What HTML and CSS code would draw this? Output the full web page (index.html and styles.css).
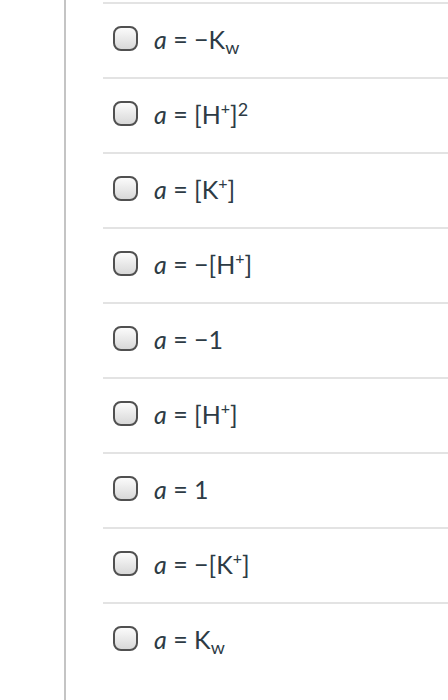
FILE: index.html
```html
<!DOCTYPE html>
<html>
<head>
<meta charset="utf-8">
<link rel="stylesheet" href="styles.css">
</head>
<body>
<div class="page">
  <div class="rail"></div>
  <ul class="answers">
    <li class="answer"><span class="radio"></span><span class="label"><i>a</i> = −K<sub>w</sub></span></li>
    <li class="answer"><span class="radio"></span><span class="label"><i>a</i> = [H<sup class="plus">+</sup>]<sup>2</sup></span></li>
    <li class="answer"><span class="radio"></span><span class="label"><i>a</i> = [K<sup class="plus">+</sup>]</span></li>
    <li class="answer"><span class="radio"></span><span class="label"><i>a</i> = −[H<sup class="plus">+</sup>]</span></li>
    <li class="answer"><span class="radio"></span><span class="label"><i>a</i> = −1</span></li>
    <li class="answer"><span class="radio"></span><span class="label"><i>a</i> = [H<sup class="plus">+</sup>]</span></li>
    <li class="answer"><span class="radio"></span><span class="label"><i>a</i> = 1</span></li>
    <li class="answer"><span class="radio"></span><span class="label"><i>a</i> = −[K<sup class="plus">+</sup>]</span></li>
    <li class="answer"><span class="radio"></span><span class="label"><i>a</i> = K<sub>w</sub></span></li>
  </ul>
</div>
</body>
</html>
```
FILE: styles.css
```css
html, body {
  margin: 0;
  padding: 0;
  background: #fff;
}
body {
  font-family: Lato, "Open Sans", sans-serif;
  color: #2d3b45;
}
.page {
  display: flex;
  height: 700px;
  overflow: hidden;
}
.rail {
  width: 64px;
  flex: none;
  border-right: 2px solid #c4c4c4;
}
.answers {
  list-style: none;
  margin: 0 0 0 37px;
  padding: 2px 0 0 0;
  flex: 1;
}
.answer {
  display: flex;
  align-items: center;
  height: 73px;
  border-top: 2px solid #e3e3e3;
  padding-left: 10px;
}
.radio {
  flex: none;
  width: 21px;
  height: 21px;
  border: 2px solid #505050;
  border-radius: 8px;
  background: linear-gradient(to bottom, #fbfbfb, #d8d8d8);
  margin-top: -4px;
}
.label {
  margin-left: 16px;
  font-size: 25px;
  line-height: 1;
  margin-top: -2px;
}
.label i {
  font-style: italic;
}
sub {
  font-size: 0.72em;
  vertical-align: -0.3em;
  line-height: 0;
}
sup {
  font-size: 0.72em;
  vertical-align: 0.45em;
  line-height: 0;
}
sup.plus {
  font-size: 0.64em;
  vertical-align: 0.62em;
}
```
